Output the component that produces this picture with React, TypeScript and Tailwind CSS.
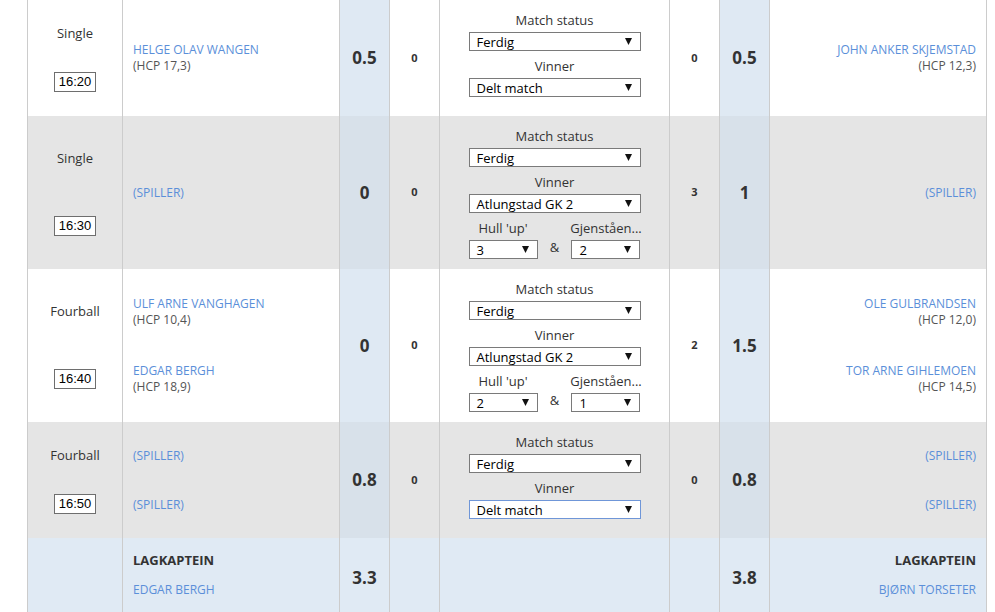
import React from "react"

type Player = { name: string; hcp?: string }

type Match = {
    type: string
    time: string
    grey: boolean
    tall: boolean
    left: Player[]
    leftScore: string
    leftHoles: string
    winner: string
    hull?: [string, string]
    right: Player[]
    rightHoles: string
    rightScore: string
    focused?: boolean
}

const matches: Match[] = [
    {
        type: "Single",
        time: "16:20",
        grey: false,
        tall: false,
        left: [{ name: "HELGE OLAV WANGEN", hcp: "17,3" }],
        leftScore: "0.5",
        leftHoles: "0",
        winner: "Delt match",
        right: [{ name: "JOHN ANKER SKJEMSTAD", hcp: "12,3" }],
        rightHoles: "0",
        rightScore: "0.5",
    },
    {
        type: "Single",
        time: "16:30",
        grey: true,
        tall: true,
        left: [{ name: "(SPILLER)" }],
        leftScore: "0",
        leftHoles: "0",
        winner: "Atlungstad GK 2",
        hull: ["3", "2"],
        right: [{ name: "(SPILLER)" }],
        rightHoles: "3",
        rightScore: "1",
    },
    {
        type: "Fourball",
        time: "16:40",
        grey: false,
        tall: true,
        left: [
            { name: "ULF ARNE VANGHAGEN", hcp: "10,4" },
            { name: "EDGAR BERGH", hcp: "18,9" },
        ],
        leftScore: "0",
        leftHoles: "0",
        winner: "Atlungstad GK 2",
        hull: ["2", "1"],
        right: [
            { name: "OLE GULBRANDSEN", hcp: "12,0" },
            { name: "TOR ARNE GIHLEMOEN", hcp: "14,5" },
        ],
        rightHoles: "2",
        rightScore: "1.5",
    },
    {
        type: "Fourball",
        time: "16:50",
        grey: true,
        tall: false,
        left: [{ name: "(SPILLER)" }, { name: "(SPILLER)" }],
        leftScore: "0.8",
        leftHoles: "0",
        winner: "Delt match",
        right: [{ name: "(SPILLER)" }, { name: "(SPILLER)" }],
        rightHoles: "0",
        rightScore: "0.8",
        focused: true,
    },
]

function Arrow() {
    return (
        <svg width="7" height="7" viewBox="0 0 7 7" className="absolute right-[8px] top-[5px]">
            <polygon points="0,0 7,0 3.5,7" fill="#111" />
        </svg>
    )
}

function FakeSelect({ value, width, focused }: { value: string; width: string; focused?: boolean }) {
    return (
        <div
            className={`relative ${width} h-[19px] bg-white border ${focused ? "border-[#6f96d8]" : "border-[#7a7a7a]"} pl-[7px] text-[13px] leading-[19px] text-black text-left`}
        >
            {value}
            <Arrow />
        </div>
    )
}

function PlayerBlock({ p, align }: { p: Player; align: "left" | "right" }) {
    return (
        <div className={`text-[12px] leading-[16px] ${align === "right" ? "text-right" : "text-left"}`}>
            <div className="text-[#5b8fd9]">{p.name}</div>
            {p.hcp && <div className="text-[#555]">(HCP {p.hcp})</div>}
        </div>
    )
}

export default function App() {
    const cell = "border-r border-[#cccccc]"

    return (
        <div className="h-[612px] w-[995px] overflow-hidden bg-white font-['Open_Sans',sans-serif] text-[#333]">
            <div className="ml-[27px] w-[960px] border-l border-[#cccccc]">
                {matches.map((m, i) => {
                    const rowBg = m.grey ? "bg-[#e5e5e5]" : "bg-white"
                    const blue = m.grey ? "bg-[#d8e1ea]" : "bg-[#dfe9f3]"
                    return (
                        <div
                            key={i}
                            className={`grid grid-cols-[95px_217px_50px_50px_230px_50px_50px_217px] ${m.tall ? "h-[153px]" : "h-[116px]"} ${rowBg}`}
                        >
                            {/* type + tee time */}
                            <div className={`${cell} flex flex-col items-center justify-around py-[9px]`}>
                                <div className="text-[13px] leading-[18px]">{m.type}</div>
                                <div className="w-[42px] h-[20px] border border-[#6e6e6e] bg-white text-center text-[13px] leading-[18px] text-black font-['Liberation_Sans',Arial,sans-serif]">
                                    {m.time}
                                </div>
                            </div>

                            {/* home players */}
                            <div className={`${cell} flex flex-col justify-around py-[9px] px-[10px]`}>
                                {m.left.map((p, j) => (
                                    <PlayerBlock key={j} p={p} align="left" />
                                ))}
                            </div>

                            <div className={`${cell} ${blue} flex items-center justify-center text-[17px] font-bold`}>
                                {m.leftScore}
                            </div>
                            <div className={`${cell} flex items-center justify-center text-[11px] font-bold`}>
                                {m.leftHoles}
                            </div>

                            {/* match status */}
                            <div className={`${cell} flex flex-col items-center pt-[11px] text-[13px] text-[#333]`}>
                                <div className="leading-[18px]">Match status</div>
                                <div className="mt-[3px]">
                                    <FakeSelect value="Ferdig" width="w-[172px]" />
                                </div>
                                <div className="mt-[6px] leading-[18px]">Vinner</div>
                                <div className="mt-[3px]">
                                    <FakeSelect value={m.winner} width="w-[172px]" focused={m.focused} />
                                </div>
                                {m.hull && (
                                    <div className="mt-[6px] w-[172px] flex justify-between items-end">
                                        <div className="flex flex-col items-center w-[69px]">
                                            <div className="leading-[18px] whitespace-nowrap">Hull 'up'</div>
                                            <div className="mt-[3px]">
                                                <FakeSelect value={m.hull[0]} width="w-[69px]" />
                                            </div>
                                        </div>
                                        <div className="pb-[3px] leading-[18px]">&amp;</div>
                                        <div className="flex flex-col items-center w-[69px]">
                                            <div className="leading-[18px] whitespace-nowrap">Gjenståen...</div>
                                            <div className="mt-[3px]">
                                                <FakeSelect value={m.hull[1]} width="w-[69px]" />
                                            </div>
                                        </div>
                                    </div>
                                )}
                            </div>

                            <div className={`${cell} flex items-center justify-center text-[11px] font-bold`}>
                                {m.rightHoles}
                            </div>
                            <div className={`${cell} ${blue} flex items-center justify-center text-[17px] font-bold`}>
                                {m.rightScore}
                            </div>

                            {/* away players */}
                            <div className={`${cell} flex flex-col justify-around py-[9px] px-[10px]`}>
                                {m.right.map((p, j) => (
                                    <PlayerBlock key={j} p={p} align="right" />
                                ))}
                            </div>
                        </div>
                    )
                })}

                {/* captains */}
                <div className="grid grid-cols-[95px_217px_50px_50px_230px_50px_50px_217px] h-[80px] bg-[#e0eaf4]">
                    <div className={cell} />
                    <div className={`${cell} px-[10px] pt-[13px]`}>
                        <div className="text-[13px] leading-[18px] font-bold">LAGKAPTEIN</div>
                        <div className="mt-[12px] text-[12px] leading-[18px] text-[#5b8fd9]">EDGAR BERGH</div>
                    </div>
                    <div className={`${cell} flex items-center justify-center text-[17px] font-bold`}>3.3</div>
                    <div className={cell} />
                    <div className={cell} />
                    <div className={cell} />
                    <div className={`${cell} flex items-center justify-center text-[17px] font-bold`}>3.8</div>
                    <div className={`${cell} px-[10px] pt-[13px] text-right`}>
                        <div className="text-[13px] leading-[18px] font-bold">LAGKAPTEIN</div>
                        <div className="mt-[12px] text-[12px] leading-[18px] text-[#5b8fd9]">BJØRN TORSETER</div>
                    </div>
                </div>
            </div>
        </div>
    )
}
